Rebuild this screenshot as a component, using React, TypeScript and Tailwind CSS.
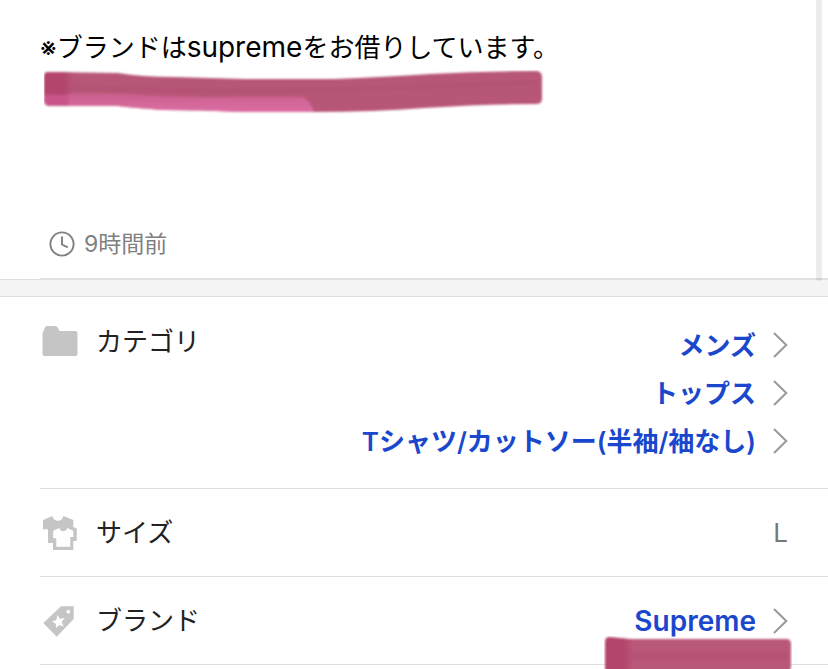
import React from 'react';

const ChevronIcon: React.FC = () => (
  <svg className="w-4 h-7 shrink-0" viewBox="0 0 16 28" fill="none" stroke="#999999" strokeWidth="2" aria-hidden="true">
    <path d="M2 2 L14.3 14 L2 26" />
  </svg>
);

const ClockIcon: React.FC = () => (
  <svg className="w-7 h-7 shrink-0" viewBox="0 0 28 28" fill="none" stroke="#808080" strokeWidth="1.9" aria-hidden="true">
    <circle cx="14" cy="14" r="11.6" />
    <path d="M14 6.5 V14.5 L19.8 17.3" />
  </svg>
);

const FolderIcon: React.FC = () => (
  <svg className="w-9 h-[30px]" viewBox="0 0 36 30" fill="#c5c5c5" aria-hidden="true">
    <path d="M2 4 Q3 0 5 0 H13 Q15 0 16 2 L17.5 5 H33.5 Q35.5 5 35.5 7 V28 Q35.5 30 33.5 30 H2.5 Q.5 30 .5 28 V8 Q.5 6.5 2 4Z" />
  </svg>
);

const ShirtsIcon: React.FC = () => (
  <svg className="w-9 h-9" viewBox="0 0 36 36" fill="#c5c5c5" fillRule="evenodd" aria-hidden="true">
    <path d="M1 5 L10.3 1 Q11.5 5.5 16 5.8 Q20.5 5.5 21.3 1 L31.3 5 V12 L34.8 13.5 V26 H31.3 V35 H11 V28 H6 V14.3 H1Z M11.2 15.7 L17.3 13 Q18.5 16.3 21.3 16.3 Q24 16.3 25.3 13 L31.3 15.7 V22 H28.3 V31.7 H14.3 V23.3 H11.2Z" />
  </svg>
);

const TagIcon: React.FC = () => (
  <svg className="w-8 h-8" viewBox="0 0 32 32" fill="#c5c5c5" fillRule="evenodd" aria-hidden="true">
    <path d="M18 1.3 H30.7 V14 L13.7 31.7 L.3 18Z M27.2 6.7 A1.9 1.9 0 1 0 23.4 6.7 A1.9 1.9 0 1 0 27.2 6.7Z M14.6 9.8 L16.5 13.7 L21.6 13.1 L18.6 17 L20.7 21.6 L16.3 20 L13 23 L12.9 18.8 L8.9 16.5 L13.3 15Z" />
  </svg>
);

// Marker stroke under the description
const LongMarker: React.FC = () => (
  <svg className="block w-[500px] h-11 ml-1" viewBox="0 0 500 44" aria-hidden="true">
    <defs>
      <filter id="soft" x="-2%" y="-10%" width="104%" height="120%">
        <feGaussianBlur stdDeviation="1" />
      </filter>
      <linearGradient id="pink" x1="0" y1="0" x2="0" y2="1">
        <stop offset="0" stopColor="#c95f8c" />
        <stop offset="1" stopColor="#dc6ea3" />
      </linearGradient>
      <linearGradient id="start" x1="0" y1="0" x2="1" y2="0">
        <stop offset="0.7" stopColor="#b2406a" stopOpacity="0.8" />
        <stop offset="1" stopColor="#b2406a" stopOpacity="0.1" />
      </linearGradient>
    </defs>
    <g filter="url(#soft)">
      <path d="M4 2 L74 3 Q98 7 130 7 L200 9 L290 9 Q340 7 386 4 Q440 1 493 1 Q498 2 498 7 V29 Q498 34 492 34 Q440 34 380 38 Q330 42 270 42 L200 42 Q155 40 120 40 Q90 38 74 36 H5 Q0 35 0 30 V7 Q0 2 4 2Z" fill="#b85678" />
      <path d="M0 23 L80 24 Q140 28 190 27 L258 27 Q266 30 270 42 L200 42 Q155 40 120 40 Q90 38 74 36 H5 Q0 35 0 30Z" fill="url(#pink)" />
      <path d="M4 2 H28 V25 H0 V7 Q0 2 4 2Z" fill="url(#start)" />
      <path d="M0 25 H25 V36 H5 Q0 35 0 30Z" fill="#c8568b" />
      <path d="M28 17 Q150 22 270 20 Q390 17 494 12" fill="none" stroke="#b04d72" strokeWidth="5" opacity=".45" />
    </g>
  </svg>
);

const ShortMarker: React.FC = () => (
  <svg className="absolute top-[59px] right-9 w-[188px] h-9" viewBox="0 0 188 36" aria-hidden="true">
    <g filter="url(#soft)">
      <path d="M5 1 L24 3 H182 Q187 3 187 8 V30 Q187 34 184 40 H4 Q1 36 1 30 V7 Q1 1 5 1Z" fill="#b95879" />
      <path d="M5 1 L28 3 V40 H4 Q1 36 1 30 V7 Q1 1 5 1Z" fill="url(#start)" />
      <path d="M26 20 H184" stroke="#b04d72" strokeWidth="9" opacity=".4" />
    </g>
  </svg>
);

const DetailLink: React.FC<{ children: React.ReactNode }> = ({ children }) => (
  <a href="#" className="flex items-center justify-end gap-4 h-12 font-semibold text-[#1a47cc]">
    <span>{children}</span>
    <ChevronIcon />
  </a>
);

const categories = ['メンズ', 'トップス', 'Tシャツ/カットソー(半袖/袖なし)'];

const App: React.FC = () => {
  return (
    <main className="relative overflow-hidden bg-white pb-1 font-['Inter','Noto_Sans_CJK_JP',sans-serif] text-[26px] text-[#222222]">
      {/* Description */}
      <section className="relative">
        <div className="ml-10 pt-7 border-b border-[#e0e0e0]">
          <p className="leading-10 text-black">
            ※ブランドは<span className="text-[28px] leading-8">supreme</span>をお借りしています。
          </p>
          <div className="pt-0.5">
            <LongMarker />
          </div>
          <div className="flex items-center gap-2 pt-[116px] pb-5 pl-2 text-[#808080]">
            <ClockIcon />
            <time className="text-[23px] leading-7">9時間前</time>
          </div>
        </div>
        <div className="absolute top-0 -bottom-0.5 right-1.5 z-10 w-1.5 rounded-b-full bg-black/7" />
      </section>

      <div className="h-[18px] border-y border-[#e0e0e0] bg-[#f4f4f4]" />

      {/* Item details */}
      <dl className="pl-10">
        <div className="flex justify-between pt-6 pb-[23px] pr-10 border-b border-[#e0e0e0]">
          <dt className="flex items-center h-10">
            <span className="w-14 pl-0.5"><FolderIcon /></span>
            カテゴリ
          </dt>
          <dd>
            {categories.map((name) => (
              <DetailLink key={name}>{name}</DetailLink>
            ))}
          </dd>
        </div>

        <div className="flex items-center justify-between h-22 pr-10 border-b border-[#e0e0e0]">
          <dt className="flex items-center">
            <span className="w-14 pl-0.5"><ShirtsIcon /></span>
            サイズ
          </dt>
          <dd className="text-[#777777]">L</dd>
        </div>

        <div className="relative flex items-center justify-between h-22 pr-10 border-b border-[#e0e0e0]">
          <dt className="flex items-center">
            <span className="w-14 pl-[3px]"><TagIcon /></span>
            ブランド
          </dt>
          <dd className="text-[28px]">
            <DetailLink>Supreme</DetailLink>
          </dd>
          <ShortMarker />
        </div>
      </dl>
    </main>
  );
};

export default App;
